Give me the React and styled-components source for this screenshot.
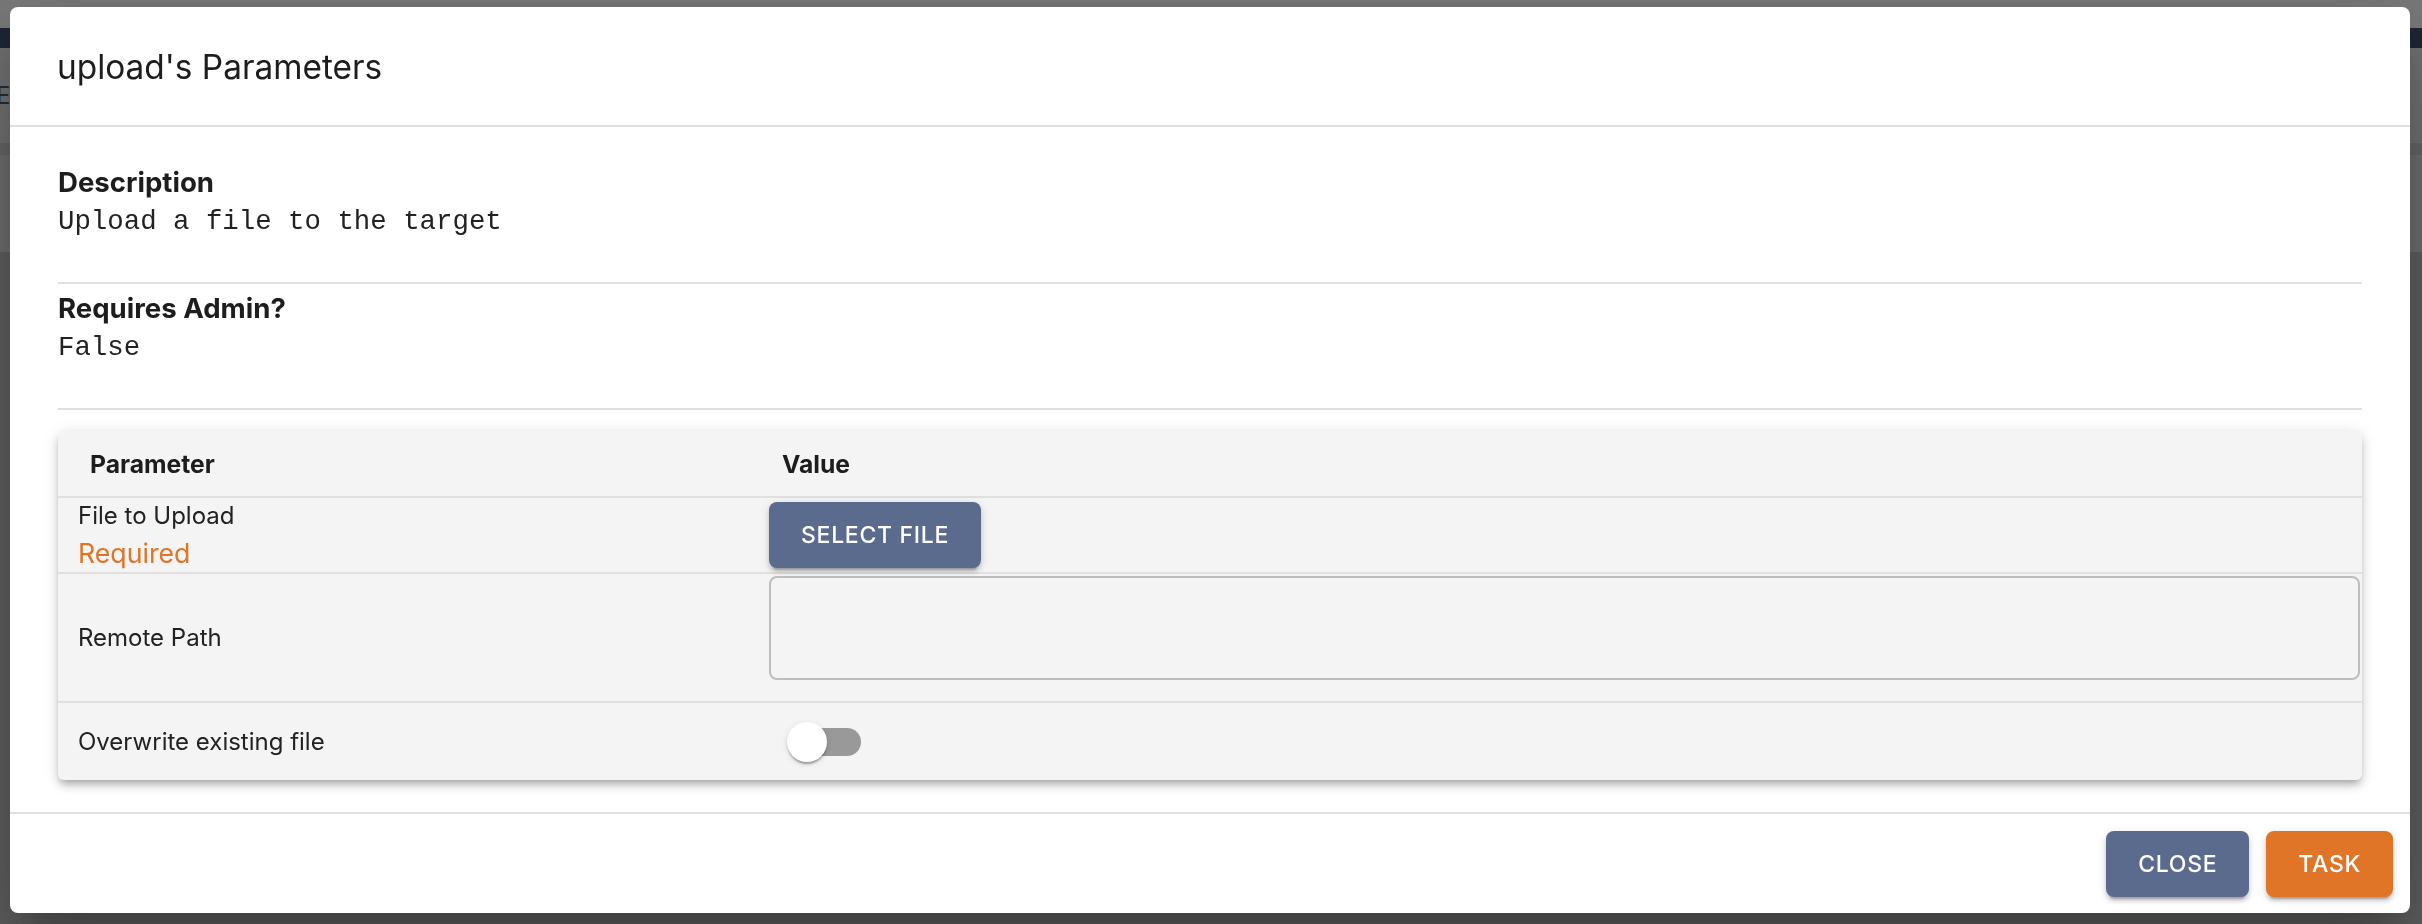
import styled, { createGlobalStyle } from 'styled-components'

const GlobalStyle = createGlobalStyle`
  *, *::before, *::after { box-sizing: border-box; }
  html, body { margin: 0; padding: 0; }
  body {
    font-family: Inter, "Noto Sans", Roboto, sans-serif;
    color: #212121;
    background: #bdbdbd;
    overflow: hidden;
  }
`

// the page that sits behind the modal
const Page = styled.div`
  height: 924px;
  display: flex;
  flex-direction: column;
`

const Band = styled.div`
  flex: ${(props) => (props.h ? 'none' : '1')};
  height: ${(props) => (props.h ? `${props.h}px` : 'auto')};
  background: ${(props) => props.bg};
  display: flex;
  align-items: center;
  color: #555;
  font-size: 24px;
`

const Backdrop = styled.div`
  position: fixed;
  inset: 0;
  background: rgba(0, 0, 0, 0.5);
  padding: 7px 0 0 10px;
`

const Dialog = styled.div`
  width: 2400px;
  height: 906px;
  background: #fff;
  border-radius: 8px;
  display: flex;
  flex-direction: column;
  box-shadow: 0 22px 30px -14px rgba(0, 0, 0, 0.2), 0 48px 76px 6px rgba(0, 0, 0, 0.14),
    0 18px 92px 16px rgba(0, 0, 0, 0.12);
`

const Title = styled.h2`
  margin: 0;
  height: 120px;
  padding: 2px 47px 0;
  display: flex;
  align-items: center;
  font-size: 33.4px;
  font-weight: 400;
  color: #1d1d1d;
  border-bottom: 2px solid #e0e0e0;
`

const Content = styled.div`
  flex: 1;
  padding: 31px 48px 0;
  display: flex;
  flex-direction: column;
`

const Section = styled.div`
  padding: 6px 0 42px;
  border-bottom: 2px solid #e0e0e0;
`

const Label = styled.div`
  font-size: 27.6px;
  font-weight: 700;
  line-height: 36px;
  color: #1d1d1d;
`

const Mono = styled.div`
  margin-top: 4px;
  font-family: "Liberation Mono", "Courier New", monospace;
  font-size: 27.4px;
  line-height: 36px;
  color: #222;
`

const Table = styled.div`
  margin-top: 21px;
  background: #f4f4f4;
  border-radius: 6px;
  box-shadow: 0 6px 6px -4px rgba(0, 0, 0, 0.2), 0 6px 8px 0 rgba(0, 0, 0, 0.14),
    0 2px 16px 0 rgba(0, 0, 0, 0.12);
`

const Row = styled.div`
  display: grid;
  grid-template-columns: 711px 1fr;
  height: ${(props) => props.h}px;
  border-bottom: ${(props) => (props.last ? 'none' : '2px solid #e0e0e0')};
`

const HeadCell = styled.div`
  display: flex;
  align-items: center;
  padding-left: ${(props) => props.pad}px;
  font-size: 24.7px;
  font-weight: 700;
  color: #1d1d1d;
`

const ParamCell = styled.div`
  display: flex;
  flex-direction: column;
  justify-content: center;
  padding-left: 20px;
`

const ParamName = styled.div`
  font-size: 24px;
  line-height: 36px;
  color: #222;
`

const Required = styled.div`
  font-size: 26.7px;
  line-height: 38px;
  color: #e07427;
`

const ValueCell = styled.div`
  display: flex;
  align-items: ${(props) => (props.top ? 'flex-start' : 'center')};
  padding: ${(props) => (props.top ? '2px 2px 21px 0' : '0')};
`

const Button = styled.button`
  height: 66px;
  padding: 0 32px;
  border: none;
  border-radius: 8px;
  background: ${(props) => props.bg};
  color: #fff;
  font-family: inherit;
  font-size: 23px;
  font-weight: 500;
  letter-spacing: 0.7px;
  text-transform: uppercase;
  cursor: pointer;
  box-shadow: 0 6px 2px -4px rgba(0, 0, 0, 0.2), 0 4px 4px 0 rgba(0, 0, 0, 0.14),
    0 2px 10px 0 rgba(0, 0, 0, 0.12);
`

const TextArea = styled.div`
  width: 100%;
  height: 104px;
  border: 2px solid #bdbdbd;
  border-radius: 8px;
`

const SwitchRoot = styled.div`
  position: relative;
  width: 116px;
  height: 76px;
  padding: 24px;
`

const Track = styled.div`
  width: 68px;
  height: 28px;
  border-radius: 14px;
  background: #999;
`

const Thumb = styled.div`
  position: absolute;
  left: 18px;
  top: 18px;
  width: 40px;
  height: 40px;
  border-radius: 50%;
  background: #fff;
  box-shadow: 0 4px 2px -2px rgba(0, 0, 0, 0.2), 0 2px 2px 0 rgba(0, 0, 0, 0.14),
    0 2px 6px 0 rgba(0, 0, 0, 0.12);
`

const Actions = styled.div`
  height: 101px;
  border-top: 2px solid #e0e0e0;
  display: flex;
  align-items: center;
  justify-content: flex-end;
  gap: 17px;
  padding-right: 17px;
`

export default function App() {
  return (
    <>
      <GlobalStyle />
      <Page>
        <Band h={28} bg="#f2f2f2" />
        <Band h={20} bg="#3d4a66" />
        <Band h={95} bg="#e2e2e2">
          <span style={{ marginLeft: -4 }}>E</span>
        </Band>
        <Band h={12} bg="#cacaca" />
        <Band h={97} bg="#dcdcdc" />
        <Band bg="#bdbdbd" />
      </Page>
      <Backdrop>
        <Dialog>
          <Title>upload's Parameters</Title>
          <Content>
            <Section>
              <Label>Description</Label>
              <Mono>Upload a file to the target</Mono>
            </Section>
            <Section>
              <Label>Requires Admin?</Label>
              <Mono>False</Mono>
            </Section>
            <Table>
              <Row h={67}>
                <HeadCell pad={32}>Parameter</HeadCell>
                <HeadCell pad={13}>Value</HeadCell>
              </Row>
              <Row h={76}>
                <ParamCell>
                  <ParamName>File to Upload</ParamName>
                  <Required>Required</Required>
                </ParamCell>
                <ValueCell>
                  <Button bg="#5b6b8e">Select File</Button>
                </ValueCell>
              </Row>
              <Row h={129}>
                <ParamCell>
                  <ParamName>Remote Path</ParamName>
                </ParamCell>
                <ValueCell top>
                  <TextArea />
                </ValueCell>
              </Row>
              <Row h={77} last>
                <ParamCell>
                  <ParamName>Overwrite existing file</ParamName>
                </ParamCell>
                <ValueCell>
                  <SwitchRoot>
                    <Track />
                    <Thumb />
                  </SwitchRoot>
                </ValueCell>
              </Row>
            </Table>
          </Content>
          <Actions>
            <Button bg="#5b6b8e">Close</Button>
            <Button bg="#e07427">Task</Button>
          </Actions>
        </Dialog>
      </Backdrop>
    </>
  )
}
